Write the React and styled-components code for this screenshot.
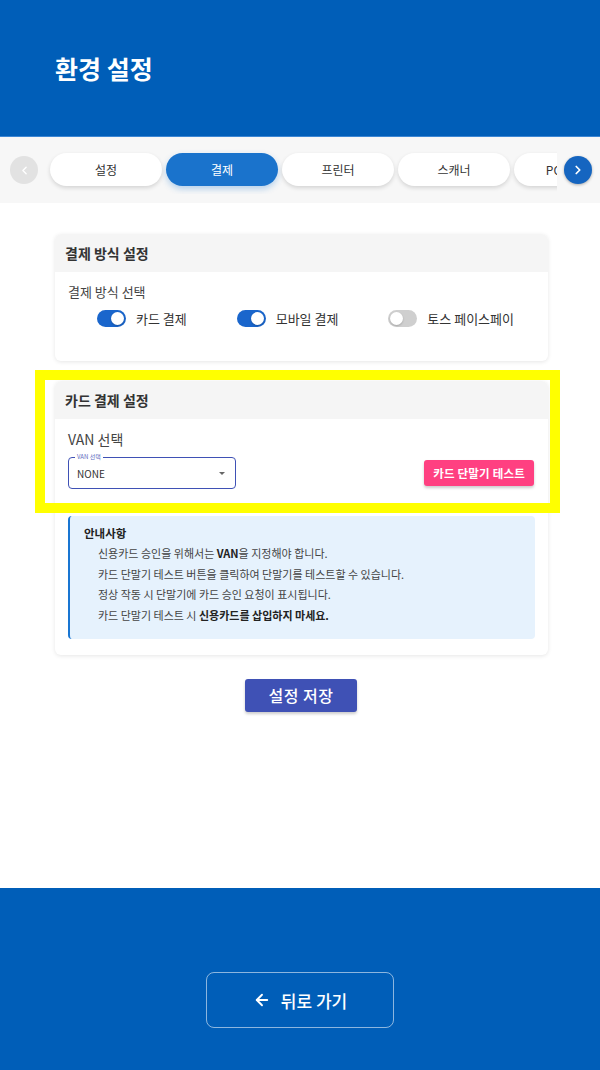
import React from 'react';
import styled, { createGlobalStyle } from 'styled-components';
import { ArrowLeft, ChevronLeft, ChevronRight } from 'lucide-react';

const GlobalStyle = createGlobalStyle`
  * { box-sizing: border-box; }
  body {
    margin: 0;
    font-family: "Noto Sans CJK KR", "Noto Sans", Roboto, sans-serif;
    background: #ffffff;
    color: #333;
  }
`;

const Page = styled.div`
  display: flex;
  flex-direction: column;
  min-height: 1070px;
`;

const Header = styled.header`
  height: 137px;
  background: #005eb8;
  border-bottom: 1px solid #3b86d4;
  display: flex;
  align-items: center;
  padding-left: 55px;
`;

const Title = styled.h1`
  margin: 0;
  color: #fff;
  font-size: 25px;
  font-weight: 700;
`;

const TabBar = styled.nav`
  height: 66px;
  background: #f7f7f7;
  display: flex;
  align-items: center;
  padding: 0 8px 0 10px;
`;

const ArrowButton = styled.button`
  flex: 0 0 28px;
  width: 28px;
  height: 28px;
  border-radius: 50%;
  border: none;
  padding: 0;
  display: flex;
  align-items: center;
  justify-content: center;
  color: #fff;
  background: ${p => (p.$active ? '#1565c0' : '#e2e2e2')};
  box-shadow: ${p => (p.$active ? '0 1px 3px rgba(0,0,0,0.3)' : 'none')};
`;

const TabScroller = styled.div`
  flex: 1;
  display: flex;
  gap: 4px;
  overflow: hidden;
  padding: 6px 0 8px 12px;
  margin-right: 7px;
`;

const Tab = styled.div`
  flex: 0 0 112px;
  height: 33px;
  border-radius: 17px;
  display: flex;
  align-items: center;
  justify-content: center;
  white-space: nowrap;
  font-size: 12px;
  color: ${p => (p.$active ? '#fff' : '#333')};
  background: ${p => (p.$active ? '#1a73cc' : '#fff')};
  box-shadow: ${p =>
    p.$active ? '0 3px 6px rgba(25,118,210,0.3)' : '0 2px 4px rgba(0,0,0,0.14)'};
`;

const Main = styled.main`
  flex: 1;
  padding: 31px 0 40px;
  display: flex;
  flex-direction: column;
  align-items: center;
`;

const Card = styled.section`
  position: relative;
  width: 493px;
  margin-left: 3px;
  margin-top: ${p => p.$gap || 0}px;
  background: #fff;
  border-radius: 6px;
  box-shadow: 0 1px 4px rgba(0,0,0,0.1);
`;

const CardHeader = styled.div`
  height: 38px;
  background: #f5f5f5;
  border-radius: 6px 6px 0 0;
  display: flex;
  align-items: center;
  padding: 0 10px;
  font-size: 14px;
  font-weight: 700;
  color: #333;
`;

const CardBody = styled.div`
  padding: ${p => p.$pad || '10px 13px 22px'};
`;

const FieldLabel = styled.div`
  font-size: ${p => p.$size || 13}px;
  color: #444;
  line-height: 20px;
`;

const ToggleRow = styled.div`
  display: flex;
  justify-content: space-around;
  align-items: center;
  margin: 7px -4px 0 4px;
`;

const ToggleItem = styled.label`
  display: flex;
  align-items: center;
  gap: 10px;
  font-size: 13px;
  color: #333;
`;

const Track = styled.span`
  width: 29px;
  height: 17px;
  border-radius: 9px;
  background: ${p => (p.$on ? '#1a66cc' : '#cfcfcf')};
  display: flex;
  align-items: center;
  justify-content: ${p => (p.$on ? 'flex-end' : 'flex-start')};
  padding: 0 2px;
`;

const Thumb = styled.span`
  width: 13px;
  height: 13px;
  border-radius: 50%;
  background: #fff;
  box-shadow: 0 1px 2px rgba(0,0,0,0.2);
`;

const Highlight = styled.div`
  position: absolute;
  left: -20px;
  right: -12px;
  top: -11px;
  height: 143px;
  border: 10px solid #ffff00;
  pointer-events: none;
`;

const VanRow = styled.div`
  display: flex;
  align-items: center;
  justify-content: space-between;
  margin-top: 8px;
`;

const Select = styled.div`
  position: relative;
  width: 168px;
  height: 32px;
  border: 1.5px solid #3f51b5;
  border-radius: 4px;
  display: flex;
  align-items: center;
  justify-content: space-between;
  padding: 0 10px 0 8px;
  font-size: 10px;
  color: #333;
`;

const SelectLegend = styled.span`
  position: absolute;
  top: -5px;
  left: 6px;
  padding: 0 2px;
  background: #fff;
  font-size: 6px;
  line-height: 8px;
  color: #5c6bc0;
`;

const Caret = styled.span`
  width: 0;
  height: 0;
  border-left: 3px solid transparent;
  border-right: 3px solid transparent;
  border-top: 3px solid #666;
`;

const TestButton = styled.button`
  height: 26px;
  padding: 0 9px;
  border: none;
  border-radius: 3px;
  background: #ff4081;
  color: #fff;
  font-family: inherit;
  font-size: 11.5px;
  font-weight: 700;
  letter-spacing: 0.2px;
  box-shadow: 0 2px 3px rgba(0,0,0,0.2);
  margin-right: 1px;
`;

const InfoBox = styled.div`
  margin-top: 27px;
  background: #e6f2fd;
  border-left: 2px solid #1976d2;
  border-radius: 4px;
  padding: 8px 14px 13px;
`;

const InfoTitle = styled.div`
  font-size: 11.5px;
  font-weight: 700;
  color: #222;
  line-height: 18px;
`;

const InfoList = styled.ul`
  margin: 1px 0 0;
  padding: 0 0 0 14px;
  list-style: none;
`;

const InfoItem = styled.li`
  font-size: 11px;
  color: #444;
  line-height: 20.7px;
  b { color: #222; }
`;

const SaveButton = styled.button`
  margin-top: 24px;
  margin-left: 2px;
  width: 112px;
  height: 33px;
  border: none;
  border-radius: 3px;
  background: #3f51b5;
  color: #fff;
  font-family: inherit;
  font-size: 16px;
  font-weight: 500;
  letter-spacing: 0.5px;
  box-shadow: 0 2px 3px rgba(0,0,0,0.2);
`;

const Footer = styled.footer`
  height: 182px;
  background: #005eb8;
  display: flex;
  justify-content: center;
  padding-top: 84px;
`;

const BackButton = styled.button`
  width: 188px;
  height: 56px;
  border: 1px solid rgba(255,255,255,0.55);
  border-radius: 8px;
  background: transparent;
  color: #fff;
  font-family: inherit;
  font-size: 17px;
  font-weight: 500;
  display: flex;
  align-items: center;
  justify-content: center;
  gap: 10px;
`;

const tabs = ['설정', '결제', '프린터', '스캐너', 'POS 설정'];
const methods = [
  { label: '카드 결제', on: true },
  { label: '모바일 결제', on: true },
  { label: '토스 페이스페이', on: false },
];

const App = () => (
  <Page>
    <GlobalStyle />
    <Header>
      <Title>환경 설정</Title>
    </Header>

    <TabBar>
      <ArrowButton>
        <ChevronLeft size={13} strokeWidth={2.5} />
      </ArrowButton>
      <TabScroller>
        {tabs.map(t => (
          <Tab key={t} $active={t === '결제'}>{t}</Tab>
        ))}
      </TabScroller>
      <ArrowButton $active>
        <ChevronRight size={14} strokeWidth={3} />
      </ArrowButton>
    </TabBar>

    <Main>
      <Card>
        <CardHeader>결제 방식 설정</CardHeader>
        <CardBody $pad="10px 13px 33px">
          <FieldLabel>결제 방식 선택</FieldLabel>
          <ToggleRow>
            {methods.map(m => (
              <ToggleItem key={m.label}>
                <Track $on={m.on}><Thumb /></Track>
                {m.label}
              </ToggleItem>
            ))}
          </ToggleRow>
        </CardBody>
      </Card>

      <Card $gap={20}>
        <Highlight />
        <CardHeader>카드 결제 설정</CardHeader>
        <CardBody $pad="10px 13px 16px">
          <FieldLabel $size={14}>VAN 선택</FieldLabel>
          <VanRow>
            <Select>
              <SelectLegend>VAN 선택</SelectLegend>
              NONE
              <Caret />
            </Select>
            <TestButton>카드 단말기 테스트</TestButton>
          </VanRow>
          <InfoBox>
            <InfoTitle>안내사항</InfoTitle>
            <InfoList>
              <InfoItem>신용카드 승인을 위해서는 <b>VAN</b>을 지정해야 합니다.</InfoItem>
              <InfoItem>카드 단말기 테스트 버튼을 클릭하여 단말기를 테스트할 수 있습니다.</InfoItem>
              <InfoItem>정상 작동 시 단말기에 카드 승인 요청이 표시됩니다.</InfoItem>
              <InfoItem>카드 단말기 테스트 시 <b>신용카드를 삽입하지 마세요.</b></InfoItem>
            </InfoList>
          </InfoBox>
        </CardBody>
      </Card>

      <SaveButton>설정 저장</SaveButton>
    </Main>

    <Footer>
      <BackButton>
        <ArrowLeft size={18} strokeWidth={2.5} />
        뒤로 가기
      </BackButton>
    </Footer>
  </Page>
);

export default App;
